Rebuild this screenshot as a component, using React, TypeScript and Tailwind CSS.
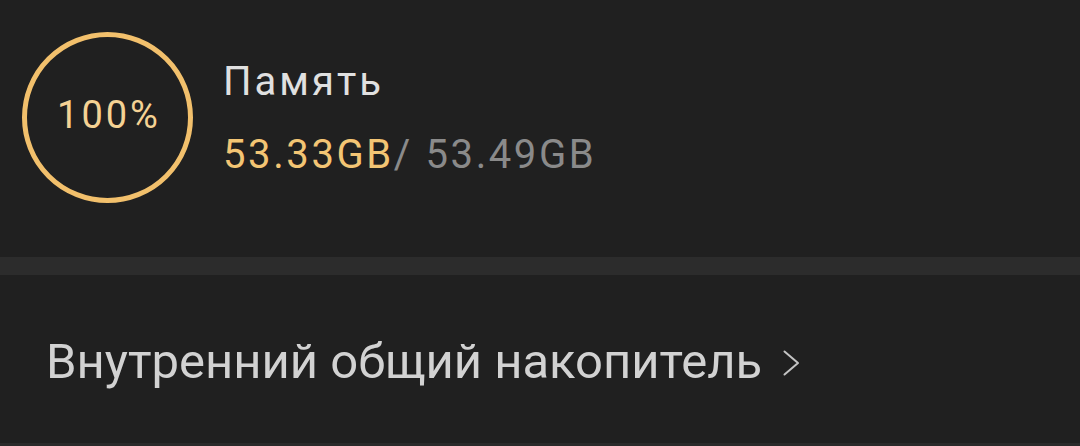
export default function App() {
  return (
    <div className="w-[1080px] h-[446px] bg-[#202020] overflow-hidden" style={{ fontFamily: "Roboto, 'Noto Sans', sans-serif" }}>
      {/* Storage summary */}
      <div className="h-[257px] flex items-start pt-[32px] pl-[22px]">
        <div className="w-[171px] h-[171px] rounded-full border-[5px] border-[#f2c06c] flex items-center justify-center pb-[6px]">
          <span className="text-[38px] text-[#f5d294] leading-none tracking-[3px] pl-[3px]">100%</span>
        </div>
        <div className="ml-[30px] pt-[30px] flex flex-col">
          <span className="text-[40px] text-[#e0e0e0] leading-none tracking-[3px]">Память</span>
          <div className="mt-[33px] text-[40px] leading-none tracking-[2.6px]">
            <span className="text-[#f3c574]">53.33GB</span>
            <span className="text-[#8a8a8a]">/ 53.49GB</span>
          </div>
        </div>
      </div>

      {/* Divider band */}
      <div className="h-[18px] bg-[#2c2c2c]" />

      {/* Internal storage row */}
      <div className="h-[168px] flex items-center pl-[46px] pt-[4px]">
        <span className="text-[49px] text-[#d2d2d2] leading-none">Внутренний общий накопитель</span>
        <svg className="ml-[21px] mt-[4px] w-[17px] h-[26px]" viewBox="0 0 17 26" fill="none">
          <path d="M1.5 1.5 L15 13 L1.5 24.5" stroke="#c4c4c4" strokeWidth="2" strokeLinecap="round" strokeLinejoin="round" />
        </svg>
      </div>
      <div className="h-[3px] bg-[#2a2a2a]" />
    </div>
  );
}
